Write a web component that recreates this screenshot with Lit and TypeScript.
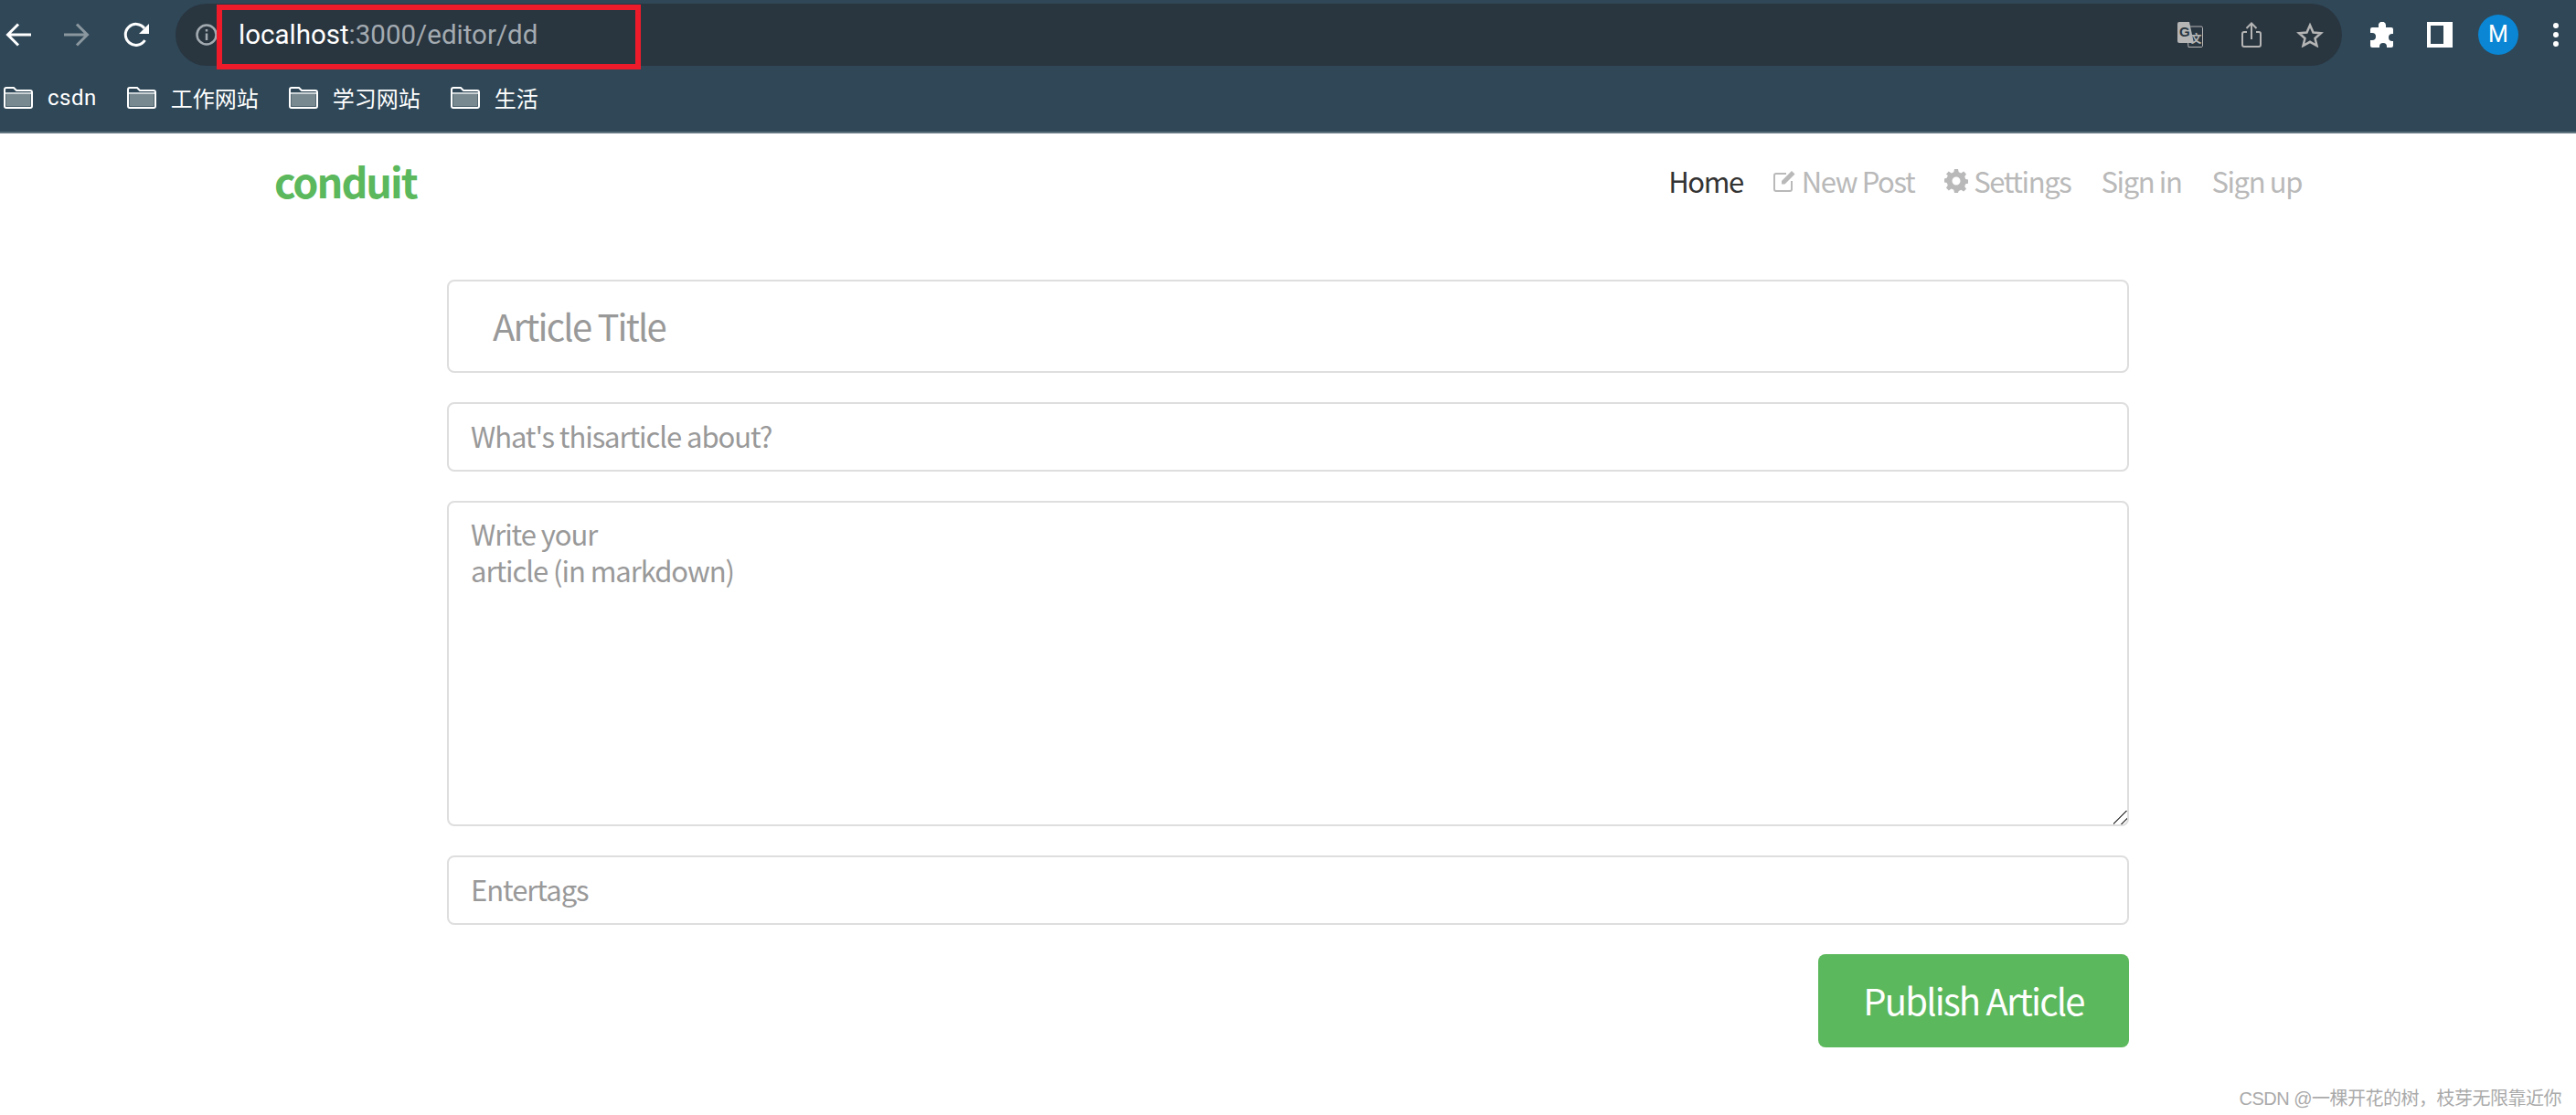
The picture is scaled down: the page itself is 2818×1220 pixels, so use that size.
import { LitElement, html, css } from "lit";
import { customElement } from "lit/decorators.js";

const folder = html`<svg class="folder" width="32" height="24" viewBox="0 0 32 24">
  <path d="M1 3a2 2 0 0 1 2-2h8l3 3h15a2 2 0 0 1 2 2v15a2 2 0 0 1-2 2H3a2 2 0 0 1-2-2z" fill="#2f4757" stroke="#fff" stroke-width="2"/>
  <path d="M2.500 8H29.500V20a1.500 1.500 0 0 1-1.500 1.500H4A1.500 1.500 0 0 1 2.500 20z" fill="#78898f"/>
  <path d="M2 7H30" stroke="#fff" stroke-width="1.500"/>
</svg>`;

@customElement("app-root")
export class AppRoot extends LitElement {
  static styles = css`
    :host { display: block; position: relative; width: 100%; min-height: 1220px; background: #fff; overflow: hidden; font-family: "Noto Sans CJK SC", "Liberation Sans", sans-serif; }
    .chrome { background: #2f4757; border-bottom: 2px solid #5f747f; }
    .toolbar { height: 76px; padding-left: 6px; display: flex; align-items: center; }
    .toolbar > svg { flex: none; display: block; }
    .fwd { margin-left: 36px; }
    .reload { margin-left: 37px; }
    .pill { position: relative; flex: none; box-sizing: border-box; width: 2370px; height: 68px; margin-left: 29px; padding: 0 20px 0 22px; border-radius: 34px; background: #29353f; display: flex; align-items: center; }
    .url { margin-left: 23px; font: 29.500px/34px Roboto, sans-serif; color: #fff; white-space: nowrap; }
    .url span { color: #a3abb1; }
    .page-actions { margin-left: auto; display: flex; align-items: center; gap: 38px; }
    .page-actions svg { display: block; }
    .translate { margin-right: 4px; }
    .redbox { position: absolute; left: 45px; top: 1px; width: 464px; height: 71px; box-sizing: border-box; border: 6px solid #ee1c2b; }
    .ext { margin-left: 30px; }
    .side { margin-left: 34px; }
    .avatar { flex: none; margin-left: 28px; width: 44px; height: 44px; border-radius: 50%; background: #0a86d4; color: #fff; font: 25px/44px Roboto, sans-serif; text-align: center; }
    .dots { margin-left: 38px; }
    .bookmarks { height: 62px; padding: 0 0 6px 4px; display: flex; align-items: center; gap: 33px; color: #fff; font-size: 24px; line-height: 32px; }
    .bookmark { display: flex; align-items: center; gap: 16px; white-space: nowrap; }
    .bookmark .csdn { font-family: Roboto, sans-serif; letter-spacing: 0.5px; }
    .folder { display: block; flex: none; }
    .nav { height: 160px; box-sizing: border-box; padding: 0 300px; display: flex; align-items: flex-start; justify-content: space-between; }
    .brand { margin-top: 22px; font-size: 45px; line-height: 60px; font-weight: 700; color: #5cb85c; letter-spacing: -2px; }
    .links { display: flex; gap: 33px; margin-top: 30px; font-size: 31px; line-height: 44px; letter-spacing: -1.400px; color: #b9b9b9; }
    .links a { display: flex; align-items: center; gap: 6px; white-space: nowrap; }
    .links .on { color: #333; }
    .form { width: 1840px; margin-left: 489px; display: flex; flex-direction: column; gap: 32px; }
    input, textarea { display: block; width: 100%; box-sizing: border-box; margin: 0; border: 2px solid #dedede; border-radius: 8px; background: #fff; outline: none; font-family: inherit; font-size: 31px; line-height: 40px; letter-spacing: -1.050px; color: #333; }
    input::placeholder, textarea::placeholder { color: #999; opacity: 1; }
    .small { height: 76px; padding: 0 24px 4px; }
    .large { height: 102px; padding: 0 48px 2px; font-size: 40px; letter-spacing: -1.800px; }
    textarea { height: 356px; padding: 14px 24px; resize: vertical; }
    textarea::-webkit-resizer { background: linear-gradient(135deg, transparent 0 46%, #555 46% 52%, transparent 52% 74%, #555 74% 80%, transparent 80%); }
    .publish { align-self: flex-end; width: 340px; height: 102px; border: 0; border-radius: 8px; background: #5cb85c; color: #fff; font-family: inherit; font-size: 40px; line-height: 50px; letter-spacing: -1.800px; padding: 0 0 3px; }
    .mark { position: absolute; right: 16px; top: 1188px; font: 20px/28px "Liberation Sans", "Noto Sans CJK SC", sans-serif; letter-spacing: -0.500px; color: #aaa; white-space: nowrap; }
  `;

  render() {
    return html`
      <div class="chrome">
        <div class="toolbar">
          <svg width="28" height="28" viewBox="0 0 28 28" fill="none" stroke="#fff" stroke-width="3"><path d="M28 14H3M14 2.500 2.500 14 14 25.500"/></svg>
          <svg class="fwd" width="28" height="28" viewBox="0 0 28 28" fill="none" stroke="#8b979e" stroke-width="3"><path d="M0 14H25M14 2.500 25.500 14 14 25.500"/></svg>
          <svg class="reload" width="28" height="28" viewBox="0 0 28 28" fill="none"><path d="M23.500 20a11.500 11.500 0 1 1-.5-13" stroke="#fff" stroke-width="3"/><path d="M28 2v11H17z" fill="#fff"/></svg>
          <div class="pill">
            <svg width="24" height="24" viewBox="0 0 24 24" fill="none" stroke="#a3abb1" stroke-width="2.500"><circle cx="12" cy="12" r="10.500"/><path d="M12 10.500V18M12 6V8.500"/></svg>
            <div class="url">localhost<span>:3000/editor/dd</span></div>
            <div class="page-actions">
              <svg class="translate" width="28" height="28" viewBox="0 0 28 28">
                <path d="M10 5h16a1.500 1.500 0 0 1 1.500 1.500v20A1.500 1.500 0 0 1 26 27.500H12z" fill="#29353f" stroke="#b5b5b5" stroke-width="1"/>
                <path d="M2 0h11l5 23H2a2 2 0 0 1-2-2V2a2 2 0 0 1 2-2z" fill="#b5b5b5"/>
                <text x="2" y="16" font-family="Liberation Sans" font-size="15" font-weight="700" fill="#29353f">G</text>
                <text x="14.500" y="23" font-family="Noto Sans CJK SC" font-size="12" font-weight="700" fill="#b5b5b5">文</text>
              </svg>
              <svg width="22" height="28" viewBox="0 0 22 28" fill="none" stroke="#b5b5b5" stroke-width="2"><path d="M6 11H3a2 2 0 0 0-2 2v12a2 2 0 0 0 2 2h16a2 2 0 0 0 2-2V13a2 2 0 0 0-2-2h-3M11 19V2M5.500 7 11 1.500 16.500 7"/></svg>
              <svg width="30" height="28" viewBox="0 0 30 28" fill="none" stroke="#b5b5b5" stroke-width="2.500"><path d="M15 3.500 18.500 11.500 27 12.300 20.500 18 22.500 26 15 21.800 7.500 26 9.500 18 3 12.300 11.500 11.500z"/></svg>
            </div>
            <div class="redbox"></div>
          </div>
          <svg class="ext" width="29" height="29" viewBox="0 0 29 29" fill="#fff"><path d="M11 1a4 4 0 0 1 7 3v2h6a2 2 0 0 1 2 2v5h-1a3.500 3.500 0 0 0 0 8h1v5a2 2 0 0 1-2 2h-5v-1a3.500 3.500 0 0 0-8 0v1H3a2 2 0 0 1-2-2v-6h2a3.500 3.500 0 0 0 0-8H1V8a2 2 0 0 1 2-2h7V4a3 3 0 0 1 1-3z"/></svg>
          <svg class="side" width="28" height="28" viewBox="0 0 28 28"><path fill="#fff" fill-rule="evenodd" d="M0 0h28v28H0zM4 4v20h14V4z"/></svg>
          <div class="avatar">M</div>
          <svg class="dots" width="6" height="26" viewBox="0 0 6 26" fill="#fff"><circle cx="3" cy="3" r="3"/><circle cx="3" cy="13" r="3"/><circle cx="3" cy="23" r="3"/></svg>
        </div>
        <div class="bookmarks">
          <div class="bookmark">${folder}<span class="csdn">csdn</span></div>
          <div class="bookmark">${folder}<span>工作网站</span></div>
          <div class="bookmark">${folder}<span>学习网站</span></div>
          <div class="bookmark">${folder}<span>生活</span></div>
        </div>
      </div>
      <div class="nav">
        <div class="brand">conduit</div>
        <div class="links">
          <a class="on">Home</a>
          <a><svg width="25" height="26" viewBox="0 0 25 26" fill="none" stroke="#b9b9b9" stroke-width="2"><path d="M14 5H3a2 2 0 0 0-2 2v15a2 2 0 0 0 2 2h15a2 2 0 0 0 2-2V13"/><path d="M9 13 20 2l3.500 3.500L12.500 16.500H9z" fill="#b9b9b9" stroke="none"/></svg>New Post</a>
          <a><svg width="26" height="26" viewBox="0 0 26 26"><path fill="#b9b9b9" fill-rule="evenodd" d="M11 0h4l.7 3.300 2.600 1.100L21.200 2.600l2.800 2.800-1.800 2.900 1.100 2.600 3 .7v4l-3 .7-1.100 2.600 1.800 2.900-2.800 2.800-2.900-1.800-2.600 1.100L15 26h-4l-.7-3.300-2.600-1.100-2.900 1.800L2 20.600l1.800-2.900-1.100-2.600-2.700-.7v-4l2.700-.7 1.100-2.600L2 5.400l2.800-2.800 2.900 1.800 2.600-1.100zM13 8.500a4.500 4.500 0 1 0 0 9 4.500 4.500 0 0 0 0-9z"/></svg>Settings</a>
          <a>Sign in</a>
          <a>Sign up</a>
        </div>
      </div>
      <div class="form">
        <input class="large" placeholder="Article Title" />
        <input class="small" placeholder="What's thisarticle about?" />
        <textarea placeholder=${"Write your\narticle (in markdown)"}></textarea>
        <input class="small" placeholder="Entertags" />
        <button class="publish">Publish Article</button>
      </div>
      <div class="mark">CSDN @一棵开花的树，枝芽无限靠近你</div>
    `;
  }
}
